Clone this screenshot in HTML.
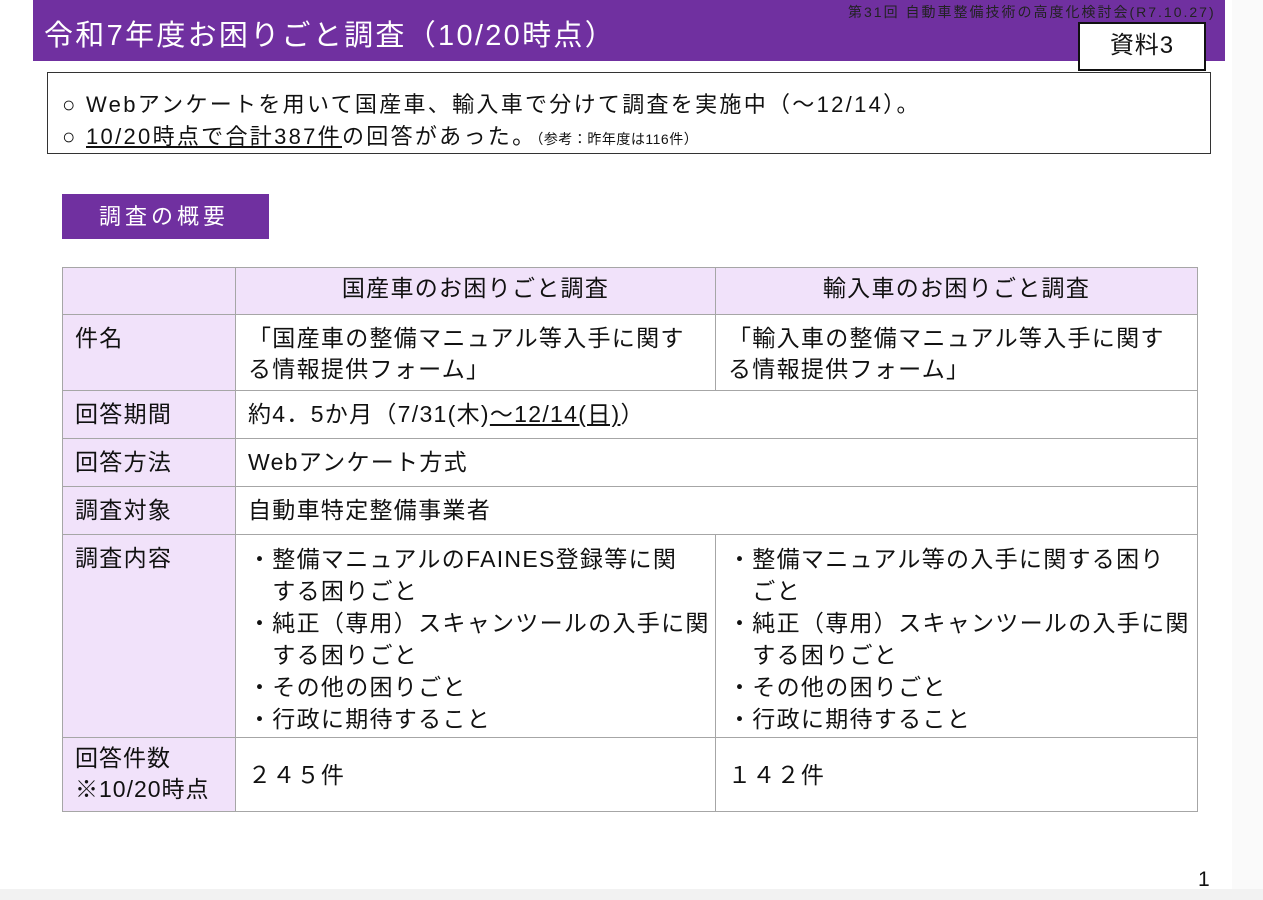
<!DOCTYPE html>
<html><head><meta charset="utf-8"><style>
*{margin:0;padding:0;box-sizing:border-box}
body{width:1263px;height:900px;background:#fff;position:relative;overflow:hidden;font-family:"Liberation Sans","Noto Sans CJK JP",sans-serif;color:#111}
.a{position:absolute;white-space:nowrap}
.bar{left:33px;top:0;width:1192px;height:61px;background:#7030a0}
.title{left:44px;top:12px;font-size:29px;color:#fff;letter-spacing:2.3px}
.meet{left:848px;top:2px;font-size:14px;color:#222;letter-spacing:2px}
.doc{left:1078px;top:22px;width:128px;height:49px;border:2px solid #111;background:#fff;font-size:24px;text-align:center;line-height:44px;letter-spacing:1px}
.box{left:47px;top:72px;width:1164px;height:82px;border:1.5px solid #333}
.l1{left:62px;top:87px;font-size:22px;letter-spacing:2.3px}
.l2{left:62px;top:119px;font-size:22px;letter-spacing:2.3px}
.sec{left:62px;top:194px;width:207px;height:45px;background:#7030a0;color:#fff;font-size:22px;line-height:45px;padding-left:37px;letter-spacing:4px}
table{position:absolute;left:62px;top:267px;width:1135px;border-collapse:collapse;font-size:23px;table-layout:fixed;letter-spacing:1.3px}
td{border:1px solid #a6a6a6;vertical-align:top;padding:8px 12px 0;line-height:31px;white-space:nowrap;overflow:hidden}
td.h{background:#f1e2fa}
.u{text-decoration:underline}
.foot{left:0;top:889px;width:1263px;height:11px;background:#f2f2f2}
.side{left:1232px;top:0;width:31px;height:900px;background:#fafafa}
</style></head><body>
<div class="a side"></div>
<div class="a bar"></div>
<div class="a title">令和7年度お困りごと調査（10/20時点）</div>
<div class="a meet">第31回 自動車整備技術の高度化検討会(R7.10.27)</div>
<div class="a doc">資料3</div>
<div class="a box"></div>
<div class="a l1">○ Webアンケートを用いて国産車、輸入車で分けて調査を実施中（～12/14）。</div>
<div class="a l2">○ <span class="u">10/20時点で合計387件</span>の回答があった。<span style="font-size:14px;letter-spacing:0.5px">（参考：昨年度は116件）</span></div>
<div class="a sec">調査の概要</div>
<table>
<colgroup><col style="width:173px"><col style="width:480px"><col style="width:482px"></colgroup>
<tr style="height:47px"><td class="h"></td><td class="h" style="text-align:center;padding-top:5px">国産車のお困りごと調査</td><td class="h" style="text-align:center;padding-top:5px">輸入車のお困りごと調査</td></tr>
<tr style="height:76px"><td class="h">件名</td><td>「国産車の整備マニュアル等入手に関す<br>る情報提供フォーム」</td><td>「輸入車の整備マニュアル等入手に関す<br>る情報提供フォーム」</td></tr>
<tr style="height:48px"><td class="h">回答期間</td><td colspan="2">約4．5か月（7/31(木)<span class="u">～12/14(日)</span>）</td></tr>
<tr style="height:48px"><td class="h">回答方法</td><td colspan="2">Webアンケート方式</td></tr>
<tr style="height:48px"><td class="h">調査対象</td><td colspan="2">自動車特定整備事業者</td></tr>
<tr style="height:203px"><td class="h">調査内容</td><td style="line-height:32px">・整備マニュアルのFAINES登録等に関<br>　する困りごと<br>・純正（専用）スキャンツールの入手に関<br>　する困りごと<br>・その他の困りごと<br>・行政に期待すること</td><td style="line-height:32px">・整備マニュアル等の入手に関する困り<br>　ごと<br>・純正（専用）スキャンツールの入手に関<br>　する困りごと<br>・その他の困りごと<br>・行政に期待すること</td></tr>
<tr style="height:74px"><td class="h" style="padding-top:5px;letter-spacing:1px">回答件数<br>※10/20時点</td><td style="padding-top:22px">２４５件</td><td style="padding-top:22px">１４２件</td></tr>
</table>
<div class="a" style="left:1198px;top:868px;font-size:21px">1</div>
<div class="a foot"></div>
</body></html>
